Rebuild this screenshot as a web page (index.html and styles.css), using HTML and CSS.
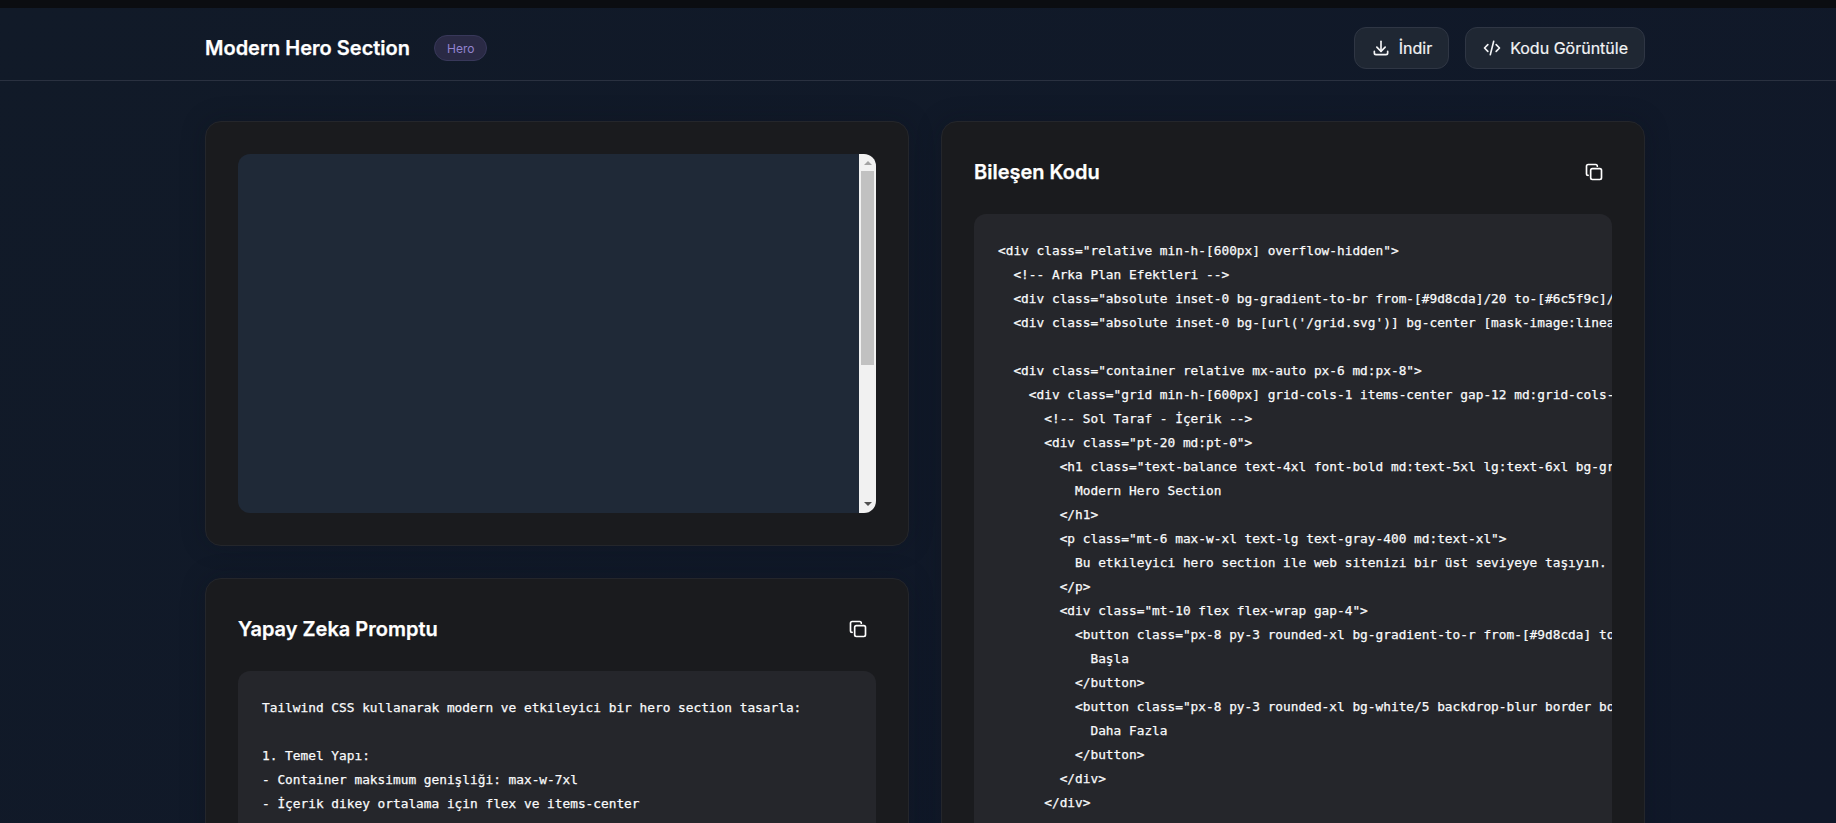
FILE: index.html
```html
<!DOCTYPE html>
<html lang="tr">
<head>
<meta charset="utf-8">
<title>Modern Hero Section</title>
<link rel="stylesheet" href="styles.css">
</head>
<body>
<div class="topbar"></div>
<header class="header">
  <div class="wrap header-row">
    <div class="title-group">
      <h1 class="page-title">Modern Hero Section</h1>
      <span class="badge">Hero</span>
    </div>
    <div class="actions">
      <button class="btn">
        <svg class="btn-icon" viewBox="0 0 24 24" fill="none" stroke="currentColor" stroke-width="2" stroke-linecap="round" stroke-linejoin="round"><path d="M4 16v2a2 2 0 0 0 2 2h12a2 2 0 0 0 2-2v-2"/><path d="M7 11l5 5 5-5"/><path d="M12 4v12"/></svg>
        <span>İndir</span>
      </button>
      <button class="btn">
        <svg class="btn-icon" viewBox="0 0 24 24" fill="none" stroke="currentColor" stroke-width="2" stroke-linecap="round" stroke-linejoin="round"><path d="M7 8l-4 4 4 4"/><path d="M17 8l4 4-4 4"/><path d="M14 4l-4 16"/></svg>
        <span>Kodu Görüntüle</span>
      </button>
    </div>
  </div>
</header>
<main class="wrap columns">
  <div class="column">
    <section class="card">
      <div class="preview">
        <div class="preview-fill"></div>
        <div class="scrollbar">
          <span class="arrow arrow-up"></span>
          <div class="track"><div class="thumb"></div></div>
          <span class="arrow arrow-down"></span>
        </div>
      </div>
    </section>
    <section class="card">
      <div class="card-head">
        <h2 class="card-title">Yapay Zeka Promptu</h2>
        <svg class="copy-icon" viewBox="0 0 24 24" fill="none" stroke="currentColor" stroke-width="2" stroke-linecap="round" stroke-linejoin="round"><rect x="8" y="8" width="13" height="13" rx="2"/><path d="M5 16a2 2 0 0 1-2-2V5a2 2 0 0 1 2-2h9a2 2 0 0 1 2 2"/></svg>
      </div>
      <pre class="code">Tailwind CSS kullanarak modern ve etkileyici bir hero section tasarla:

1. Temel Yapı:
- Container maksimum genişliği: max-w-7xl
- İçerik dikey ortalama için flex ve items-center
- Responsive padding: px-6 md:px-8</pre>
    </section>
  </div>
  <div class="column">
    <section class="card">
      <div class="card-head">
        <h2 class="card-title">Bileşen Kodu</h2>
        <svg class="copy-icon" viewBox="0 0 24 24" fill="none" stroke="currentColor" stroke-width="2" stroke-linecap="round" stroke-linejoin="round"><rect x="8" y="8" width="13" height="13" rx="2"/><path d="M5 16a2 2 0 0 1-2-2V5a2 2 0 0 1 2-2h9a2 2 0 0 1 2 2"/></svg>
      </div>
      <pre class="code">&lt;div class="relative min-h-[600px] overflow-hidden"&gt;
  &lt;!-- Arka Plan Efektleri --&gt;
  &lt;div class="absolute inset-0 bg-gradient-to-br from-[#9d8cda]/20 to-[#6c5f9c]/20"&gt;&lt;/div&gt;
  &lt;div class="absolute inset-0 bg-[url('/grid.svg')] bg-center [mask-image:linear-gradient(180deg,white,rgba(255,255,255,0))]"&gt;&lt;/div&gt;

  &lt;div class="container relative mx-auto px-6 md:px-8"&gt;
    &lt;div class="grid min-h-[600px] grid-cols-1 items-center gap-12 md:grid-cols-2"&gt;
      &lt;!-- Sol Taraf - İçerik --&gt;
      &lt;div class="pt-20 md:pt-0"&gt;
        &lt;h1 class="text-balance text-4xl font-bold md:text-5xl lg:text-6xl bg-gradient-to-r"&gt;
          Modern Hero Section
        &lt;/h1&gt;
        &lt;p class="mt-6 max-w-xl text-lg text-gray-400 md:text-xl"&gt;
          Bu etkileyici hero section ile web sitenizi bir üst seviyeye taşıyın.
        &lt;/p&gt;
        &lt;div class="mt-10 flex flex-wrap gap-4"&gt;
          &lt;button class="px-8 py-3 rounded-xl bg-gradient-to-r from-[#9d8cda] to-[#6c5f9c]"&gt;
            Başla
          &lt;/button&gt;
          &lt;button class="px-8 py-3 rounded-xl bg-white/5 backdrop-blur border border-white/10"&gt;
            Daha Fazla
          &lt;/button&gt;
        &lt;/div&gt;
      &lt;/div&gt;</pre>
    </section>
  </div>
</main>
</body>
</html>
```
FILE: styles.css
```css
* { box-sizing: border-box; }
html, body { margin: 0; height: 823px; overflow: hidden; }
body {
  background: linear-gradient(135deg, #111a28, #101829);
  color: #fff;
  font-family: Inter, "Noto Sans", sans-serif;
}
.topbar { height: 8px; background: #0b0d11; }
.wrap { width: 1440px; margin-left: 205px; }
.header { height: 73px; padding-top: 19px; border-bottom: 1px solid #2a3140; }
.header-row { height: 42px; display: flex; align-items: center; justify-content: space-between; }
.title-group { display: flex; align-items: center; gap: 24px; }
.page-title { margin: 0; font-size: 20px; line-height: 28px; font-weight: 600; color: #fff; -webkit-text-stroke: .25px #fff; }
.badge {
  height: 26px; padding: 0 12px; display: flex; align-items: center;
  font-size: 12px; color: #9283d0; background: #2a2a45;
  border: 1px solid #38385a; border-radius: 999px;
}
.actions { display: flex; gap: 16px; }
.btn {
  height: 42px; padding: 0 16px; display: flex; align-items: center; gap: 8px;
  font-family: inherit; font-size: 16px; font-weight: 400; color: #f3f4f6;
  -webkit-text-stroke: .2px #f3f4f6;
  background: #1f2733; border: 1px solid #2f3644; border-radius: 12px;
}
.btn-icon { width: 20px; height: 20px; stroke-width: 2; }
.columns { margin-top: 40px; display: grid; grid-template-columns: 1fr 1fr; gap: 32px; align-items: start; }
.column { display: flex; flex-direction: column; gap: 32px; min-width: 0; }
.card {
  background: #1a1b1e; border: 1px solid #24262b; border-radius: 16px; padding: 32px;
  box-shadow: 0 0 24px rgba(10, 14, 24, .25);
}
.preview { height: 359px; display: flex; border-radius: 12px; overflow: hidden; }
.preview-fill { flex: 1; background: #1f2937; }
.scrollbar { width: 17px; background: #f1f1f1; display: flex; flex-direction: column; align-items: center; }
.arrow { width: 0; height: 0; flex: none; border-left: 4px solid transparent; border-right: 4px solid transparent; }
.arrow-up { margin: 7px 0 6px; border-bottom: 4px solid #a3a3a3; }
.arrow-down { margin: 6px 0 7px; border-top: 4px solid #505050; }
.track { flex: 1; width: 100%; }
.thumb { height: 194px; background: #c1c1c1; margin: 0 2px; }
.card-head { height: 36px; margin-bottom: 24px; display: flex; align-items: center; justify-content: space-between; }
.card-title { margin: 0; font-size: 20px; line-height: 28px; font-weight: 600; color: #fff; -webkit-text-stroke: .25px #fff; }
.copy-icon { width: 20px; height: 20px; margin-right: 8px; color: #fff; stroke-width: 2; }
.code {
  margin: 0; padding: 25px 24px 23px; background: #25262b; border-radius: 12px; overflow: hidden;
  font-family: "DejaVu Sans Mono", monospace; font-size: 12.8px; line-height: 24px;
  color: #f9fafb; -webkit-text-stroke: .25px #f9fafb;
}
```
